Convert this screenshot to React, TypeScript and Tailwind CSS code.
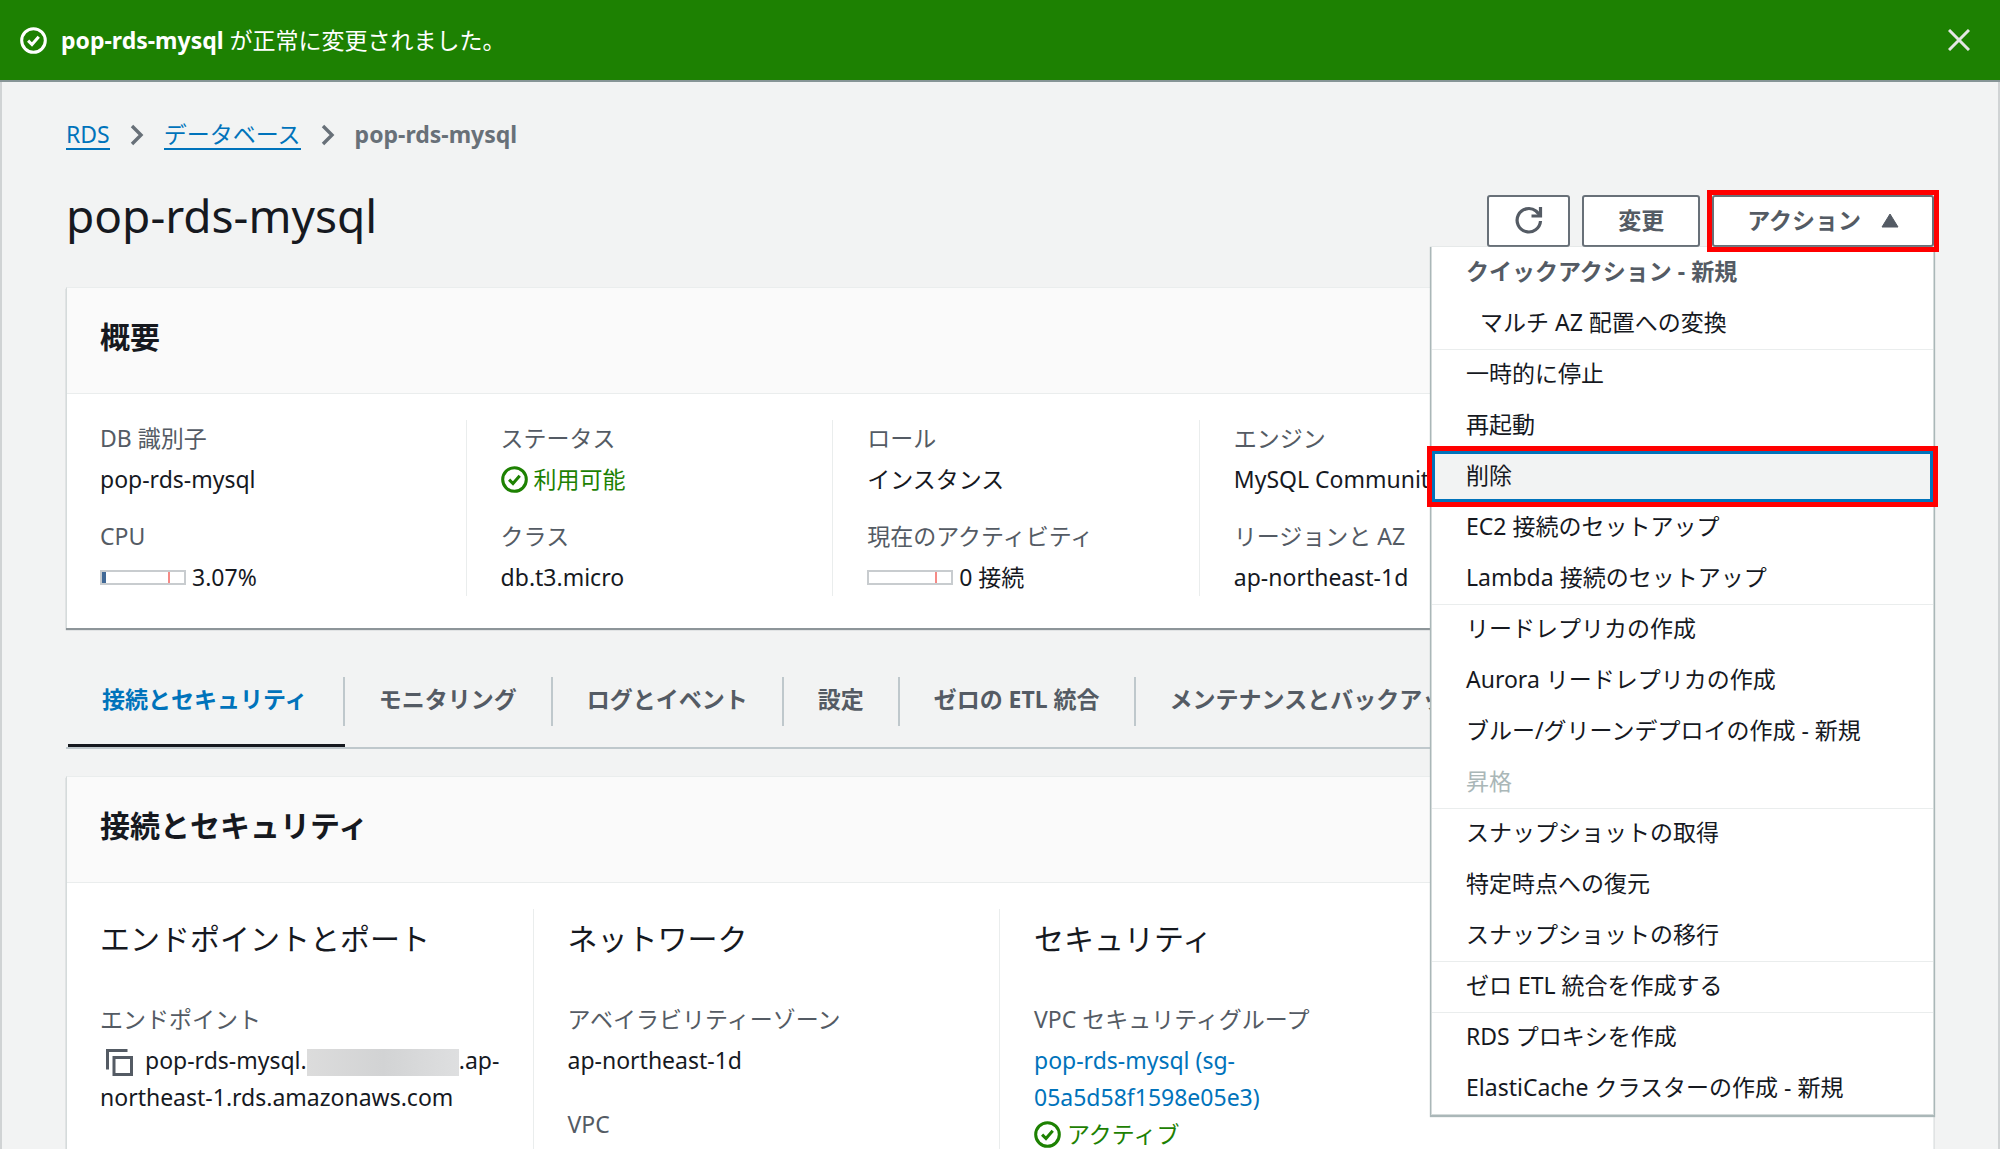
import React from "react";

interface MenuItem {
  label: string;
  heading?: boolean;
  indent?: boolean;
  disabled?: boolean;
  selected?: boolean;
}

const menuGroups: MenuItem[][] = [
  [
    { label: "クイックアクション - 新規", heading: true },
    { label: "マルチ AZ 配置への変換", indent: true },
  ],
  [
    { label: "一時的に停止" },
    { label: "再起動" },
    { label: "削除", selected: true },
    { label: "EC2 接続のセットアップ" },
    { label: "Lambda 接続のセットアップ" },
  ],
  [
    { label: "リードレプリカの作成" },
    { label: "Aurora リードレプリカの作成" },
    { label: "ブルー/グリーンデプロイの作成 - 新規" },
    { label: "昇格", disabled: true },
  ],
  [
    { label: "スナップショットの取得" },
    { label: "特定時点への復元" },
    { label: "スナップショットの移行" },
  ],
  [{ label: "ゼロ ETL 統合を作成する" }],
  [
    { label: "RDS プロキシを作成" },
    { label: "ElastiCache クラスターの作成 - 新規" },
  ],
];

const tabs = [
  "接続とセキュリティ",
  "モニタリング",
  "ログとイベント",
  "設定",
  "ゼロの ETL 統合",
  "メンテナンスとバックアップ",
];

const CheckIcon = () => (
  <svg viewBox="0 0 16 16" className="size-[27px] shrink-0" fill="none" stroke="currentColor" strokeWidth="1.8">
    <circle cx="8" cy="8" r="7" />
    <path d="M4.8 8.1l2.3 2.3 4-4.6" />
  </svg>
);

const ChevronIcon = () => (
  <svg viewBox="0 0 14 22" className="h-[22px] w-[14px]" fill="none" stroke="#687078" strokeWidth="3.4">
    <path d="M2 2l9 9-9 9" />
  </svg>
);

const CloseIcon = () => (
  <svg viewBox="0 0 22 22" className="size-[22px]" fill="none" stroke="#e4e6e4" strokeWidth="3">
    <path d="M1 1l20 20M21 1L1 21" />
  </svg>
);

const RefreshIcon = () => (
  <svg viewBox="0 0 28 28" className="size-7" fill="none" stroke="currentColor" strokeWidth="3.2">
    <path d="M25.500 15A11.700 11.700 0 1 1 21 5L25.500 9.500" />
    <path d="M25.500 1v9h-9" />
  </svg>
);

const CopyIcon = () => (
  <svg viewBox="0 0 27 27" className="size-[27px]" fill="none" stroke="currentColor" strokeWidth="3">
    <path d="M21.500 1.500H1.500v19" />
    <path d="M8 8.500h17.500v17H8z" />
  </svg>
);

const Status = ({ children }: { children: React.ReactNode }) => (
  <div className="flex items-center gap-1.5 text-[#1d8102]">
    <CheckIcon />
    {children}
  </div>
);

const Meter = ({ value, label }: { value: number; label: string }) => (
  <div className="flex items-center gap-1.5">
    <div
      role="meter"
      aria-label={label}
      aria-valuenow={value}
      className="relative h-[15px] w-[86px] border-2 border-[#c8cccf] bg-white"
    >
      <div className="h-full bg-[#416997]" style={{ width: `${value * 1.6}%` }} />
      <div className="absolute inset-y-0 left-[80%] w-0.5 bg-[#f58a86]" />
    </div>
    {label}
  </div>
);

const Field = ({ label, children }: { label: string; children: React.ReactNode }) => (
  <div className="flex flex-col gap-1">
    <div className="text-[#545b64]">{label}</div>
    <div>{children}</div>
  </div>
);

const Card = ({ title, children }: { title: string; children: React.ReactNode }) => (
  <section className="border-x border-t border-[#eaeded] border-l-[#d5dbdb] bg-white shadow-[0_2px_1px_#8d9599]">
    <header className="border-b border-[#eaeded] bg-[#fafafa] px-[33px] pt-[29px] pb-9">
      <h2 className="text-[30px] leading-10 font-bold">{title}</h2>
    </header>
    {children}
  </section>
);

const ActionsMenu = () => (
  <ul
    role="menu"
    className="absolute top-full right-0 z-10 w-[503px] border border-t-0 border-[#d5dbdb] bg-white shadow-[0_1px_1px_1px_#aab7b8]"
  >
    {menuGroups.map((group, i) => (
      <li key={i} role="none" className="border-t border-[#eaeded] first:border-t-0">
        <ul role="none">
          {group.map((item, j) => (
            <li key={item.label} role="none" className="relative">
              {item.heading ? (
                <div className="h-[51px] px-[34px] pt-1 leading-10 font-bold text-[#545b64]">{item.label}</div>
              ) : (
                <button
                  type="button"
                  role="menuitem"
                  disabled={item.disabled}
                  className={`block w-full pr-4 pb-1 text-left leading-10 disabled:text-[#aab7b8] ${
                    j === 0 ? "h-[50px]" : "h-[51px]"
                  } ${item.indent ? "pl-12" : "pl-[34px]"} ${
                    item.selected ? "bg-[#f2f3f3] shadow-[inset_0_0_0_3px_#0073bb]" : ""
                  }`}
                >
                  {item.label}
                </button>
              )}
              {item.selected && (
                <div className="pointer-events-none absolute -inset-[5px] border-[5px] border-[#ff0000]" />
              )}
            </li>
          ))}
        </ul>
      </li>
    ))}
  </ul>
);

const buttonClass =
  "flex h-[52px] items-center justify-center rounded-[3px] border-2 border-[#687078] bg-white pb-0.5 font-bold text-[#545b64]";

const App = () => {
  return (
    <div className="flex h-screen flex-col overflow-hidden bg-[#f2f3f3] font-['Noto_Sans','Noto_Sans_CJK_JP',sans-serif] text-[23px] leading-[37px] text-[#16191f]">
      <div className="flex h-[82px] shrink-0 items-center gap-3.5 border-b-2 border-[#879596] bg-[#1d8102] pr-[30px] pl-5 text-white">
        <CheckIcon />
        <p className="flex-1">
          <strong>pop-rds-mysql</strong> が正常に変更されました。
        </p>
        <button type="button" aria-label="閉じる">
          <CloseIcon />
        </button>
      </div>

      <main className="flex-1 border-x-2 border-[#d0d3d4] pr-16 pl-16">
        <nav className="flex items-center gap-5 pt-[34px]">
          <a href="#rds" className="border-b-2 border-[#0073bb] leading-7 text-[#0073bb]">RDS</a>
          <ChevronIcon />
          <a href="#databases" className="border-b-2 border-[#0073bb] leading-7 text-[#0073bb]">データベース</a>
          <ChevronIcon />
          <span className="font-bold text-[#687078]">pop-rds-mysql</span>
        </nav>

        <div className="mt-7 flex items-start justify-between">
          <h1 className="text-[46px] leading-[68px]">pop-rds-mysql</h1>
          <div className="mt-3.5 flex gap-3">
            <button type="button" aria-label="更新" className={`${buttonClass} w-[83px]`}>
              <RefreshIcon />
            </button>
            <button type="button" className={`${buttonClass} px-[34px]`}>変更</button>
            <div className="relative">
              <button type="button" aria-expanded="true" className={`${buttonClass} gap-5 px-[33px]`}>
                アクション
                <svg
                  viewBox="0 0 18 16"
                  className="h-4 w-[18px]"
                  fill="currentColor"
                  stroke="currentColor"
                  strokeLinejoin="round"
                >
                  <path d="M9 2l8 13H1z" />
                </svg>
              </button>
              <ActionsMenu />
              <div className="pointer-events-none absolute -inset-[5px] z-20 border-[5px] border-[#ff0000]" />
            </div>
          </div>
        </div>

        <div className="mt-[38px]">
          <Card title="概要">
            <div className="grid grid-cols-5 divide-x divide-[#eaeded] pt-[26px] pb-8 pl-[33px]">
              <div className="flex flex-col gap-5">
                <Field label="DB 識別子">pop-rds-mysql</Field>
                <Field label="CPU">
                  <Meter value={3.07} label="3.07%" />
                </Field>
              </div>
              <div className="flex flex-col gap-5 pl-[34px]">
                <Field label="ステータス">
                  <Status>利用可能</Status>
                </Field>
                <Field label="クラス">db.t3.micro</Field>
              </div>
              <div className="flex flex-col gap-5 pl-[34px]">
                <Field label="ロール">インスタンス</Field>
                <Field label="現在のアクティビティ">
                  <Meter value={0} label="0 接続" />
                </Field>
              </div>
              <div className="flex flex-col gap-5 pl-[34px]">
                <Field label="エンジン">MySQL Community</Field>
                <Field label="リージョンと AZ">ap-northeast-1d</Field>
              </div>
            </div>
          </Card>
        </div>

        <div role="tablist" className="mt-[35px] flex overflow-hidden border-b-2 border-[#bfc8cc] pl-0.5 whitespace-nowrap">
          {tabs.map((tab, i) => (
            <button
              key={tab}
              type="button"
              role="tab"
              aria-selected={i === 0}
              className={`-mb-px border-b-4 pt-3.5 pb-[18px] font-bold ${
                i === 0 ? "border-[#16191f] text-[#0073bb]" : "border-transparent text-[#545b64]"
              }`}
            >
              <span
                className={`block border-r-2 border-[#bfc8cc] pt-1 pb-2 pl-[34px] ${i === 0 ? "pr-[35px]" : "pr-[34px]"}`}
              >
                {tab}
              </span>
            </button>
          ))}
        </div>

        <div className="mt-[27px]">
          <Card title="接続とセキュリティ">
            <div className="grid grid-cols-4 divide-x divide-[#eaeded] pt-[26px] pb-10">
              <div className="pr-5 pl-[33px]">
                <h3 className="mt-2.5 mb-[42px] text-[30px] leading-10">エンドポイントとポート</h3>
                <Field label="エンドポイント">
                  <button type="button" aria-label="コピー" className="mr-3 ml-1.5 align-middle text-[#545b64]">
                    <CopyIcon />
                  </button>
                  pop-rds-mysql.
                  <span className="inline-block h-[27px] w-[152px] bg-linear-to-r from-[#dcdcdc] via-[#d2d3d4] to-[#dedfe0] align-middle" />
                  .ap-northeast-1.rds.amazonaws.com
                </Field>
              </div>
              <div className="px-[34px]">
                <h3 className="mt-2.5 mb-[42px] text-[30px] leading-10">ネットワーク</h3>
                <div className="flex flex-col gap-[27px]">
                  <Field label="アベイラビリティーゾーン">ap-northeast-1d</Field>
                  <Field label="VPC">{null}</Field>
                </div>
              </div>
              <div className="px-[34px]">
                <h3 className="mt-2.5 mb-[42px] text-[30px] leading-10">セキュリティ</h3>
                <Field label="VPC セキュリティグループ">
                  <a href="#sg" className="text-[#0073bb]">pop-rds-mysql (sg-05a5d58f1598e05e3)</a>
                  <Status>アクティブ</Status>
                </Field>
              </div>
            </div>
          </Card>
        </div>
      </main>
    </div>
  );
};

export default App;
